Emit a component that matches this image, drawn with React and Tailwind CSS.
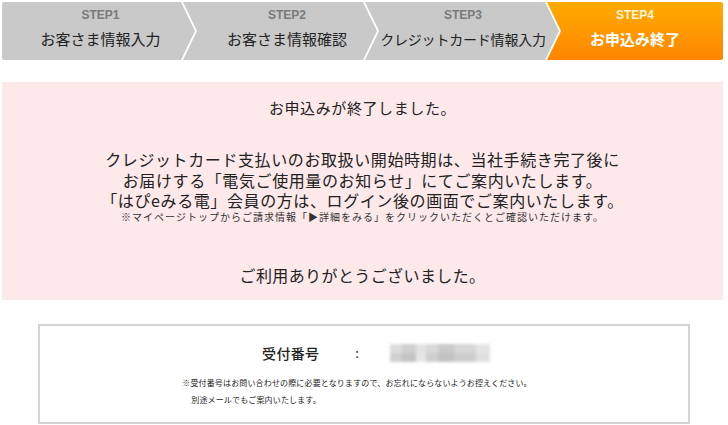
import React from "react";

const steps = [
  { label: "STEP1", title: "お客さま情報入力" },
  { label: "STEP2", title: "お客さま情報確認", pad: "pl-[14px]" },
  { label: "STEP3", title: "クレジットカード情報入力", pad: "pl-[2px]", small: true },
  { label: "STEP4", title: "お申込み終了", active: true },
];

const StepBar = () => (
  <div className="flex h-[58px]">
    {/* step1: flat left, arrow right */}
    <div className="w-[193px] shrink-0 bg-[#c9c9c9] rounded-l-[2px] [clip-path:polygon(0_0,179px_0,100%_50%,179px_100%,0_100%)] flex flex-col items-center pl-[4px]">
      <StepText step={steps[0]} />
    </div>
    {/* step2 / step3: notch left, arrow right */}
    {steps.slice(1, 3).map((s) => (
      <div
        key={s.label}
        className={`w-[194px] shrink-0 -ml-[12px] bg-[#c9c9c9] [clip-path:polygon(0_0,180px_0,100%_50%,180px_100%,0_100%,14px_50%)] flex flex-col items-center ${s.pad}`}
      >
        <StepText step={s} />
      </div>
    ))}
    {/* step4: notch left, flat right */}
    <div className="flex-1 -ml-[12px] bg-gradient-to-b from-[#ffab00] to-[#ff8500] rounded-r-[2px] [clip-path:polygon(0_0,100%_0,100%_100%,0_100%,14px_50%)] flex flex-col items-center">
      <StepText step={steps[3]} />
    </div>
  </div>
);

const StepText = ({ step }) => (
  <>
    <p
      className={`mt-[5px] text-[12px] leading-[16px] font-bold font-['Liberation_Sans',sans-serif] ${
        step.active ? "text-[#fff6d8]" : "text-[#7a7a7a]"
      }`}
    >
      {step.label}
    </p>
    <p
      className={`mt-[6px] leading-[20px] whitespace-nowrap ${
        step.small ? "text-[14px] tracking-[-0.2px]" : "text-[15px]"
      } ${step.active ? "text-white font-bold" : "text-[#222]"}`}
    >
      {step.title}
    </p>
  </>
);

export default function App() {
  return (
    <div className="w-[728px] h-[425px] overflow-hidden bg-white px-[2px] pt-[2px] font-['Noto_Sans_CJK_JP','Noto_Sans',sans-serif] text-[#222]">
      <div className="w-[721px]">
        <StepBar />

        {/* message */}
        <div className="mt-[22px] h-[218px] bg-[#fde8ea] flex flex-col items-center pt-[16px]">
          <p className="text-[15px] leading-[20px] tracking-[0.6px]">お申込みが終了しました。</p>
          <div className="mt-[31px] text-center text-[16px] leading-[20.5px] tracking-[0.6px]">
            <p>クレジットカード支払いのお取扱い開始時期は、当社手続き完了後に</p>
            <p>お届けする「電気ご使用量のお知らせ」にてご案内いたします。</p>
            <p>「はぴeみる電」会員の方は、ログイン後の画面でご案内いたします。</p>
          </div>
          <p className="-mt-[1px] text-[10px] leading-[14px] tracking-[1px] text-[#333]">
            ※マイページトップからご請求情報「▶詳細をみる」をクリックいただくとご確認いただけます。
          </p>
          <p className="mt-[41px] text-[16px] leading-[20px] tracking-[0.4px]">ご利用ありがとうございました。</p>
        </div>

        {/* receipt number */}
        <div className="mt-[24px] ml-[36px] w-[652px] h-[100px] border-2 border-[#d4d4d4] flex flex-col items-center">
          <div className="mt-[17px] ml-[24px] flex items-center h-[20px]">
            <span className="text-[14px] font-medium tracking-[0.3px]">受付番号</span>
            <span className="ml-[36px] text-[13px]">:</span>
            <div className="ml-[31px] flex flex-col w-[100px] h-[18px] blur-[1.5px]">
              <div className="flex h-[9px]">
                <div className="w-[12px] bg-[#dcdcdc]" />
                <div className="w-[14px] bg-[#cfcfcf]" />
                <div className="w-[10px] bg-[#e2e2e2]" />
                <div className="w-[12px] bg-[#d8d8d8]" />
                <div className="w-[16px] bg-[#cacaca]" />
                <div className="w-[22px] bg-[#d6d6d6]" />
                <div className="w-[14px] bg-[#e4e4e4]" />
              </div>
              <div className="flex h-[9px]">
                <div className="w-[12px] bg-[#d0d0d0]" />
                <div className="w-[14px] bg-[#c4c4c4]" />
                <div className="w-[10px] bg-[#e6e6e6]" />
                <div className="w-[12px] bg-[#cfcfcf]" />
                <div className="w-[16px] bg-[#c2c2c2]" />
                <div className="w-[22px] bg-[#cdcdcd]" />
                <div className="w-[14px] bg-[#e0e0e0]" />
              </div>
            </div>
          </div>
          <div className="mt-[11px] -ml-[14px] text-[8px] leading-[17px] tracking-[0.15px] text-[#222]">
            <p>※受付番号はお問い合わせの際に必要となりますので、お忘れにならないようお控えください。</p>
            <p className="pl-[9px]">別途メールでもご案内いたします。</p>
          </div>
        </div>
      </div>
    </div>
  );
}
